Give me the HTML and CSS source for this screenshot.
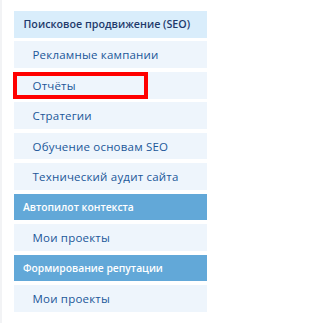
FILE: index.html
```html
<!DOCTYPE html>
<html lang="ru">
<head>
<meta charset="utf-8">
<link rel="stylesheet" href="styles.css">
</head>
<body>
<div class="page">
  <nav class="menu">
    <div class="row head-light">Поисковое продвижение (SEO)</div>
    <div class="row item">Рекламные кампании</div>
    <div class="row item marked">Отчёты<span class="mark"></span></div>
    <div class="row item">Стратегии</div>
    <div class="row item">Обучение основам SEO</div>
    <div class="row item">Технический аудит сайта</div>
    <div class="row head-dark">Автопилот контекста</div>
    <div class="row item">Мои проекты</div>
    <div class="row head-dark">Формирование репутации</div>
    <div class="row item">Мои проекты</div>
  </nav>
</div>
</body>
</html>
```
FILE: styles.css
```css
html, body {
  margin: 0;
  padding: 0;
  background: #ffffff;
}
.page {
  border-left: 2px solid #f2f3f5;
  min-height: 323px;
  box-sizing: border-box;
  padding: 11px 11px 0 12px;
}
.menu {
  display: flex;
  flex-direction: column;
  gap: 3.75px;
  width: 192.7px;
}
.row {
  height: 26.7px;
  display: flex;
  align-items: center;
  box-sizing: border-box;
  font-family: "Open Sans", "DejaVu Sans", sans-serif;
  white-space: nowrap;
  position: relative;
}
.head-light {
  background: #d9edfb;
  color: #1e3a6b;
  font-weight: 600;
  font-size: 10.7px;
  padding-left: 9.5px;
}
.item {
  background: #eef5fc;
  color: #1b5799;
  padding-left: 18.5px;
  font-size: 11.5px;
  letter-spacing: 0.2px;
}
.head-dark {
  background: #62a8d8;
  color: #ffffff;
  font-weight: 600;
  font-size: 10.3px;
  padding-left: 9px;
}
.mark {
  position: absolute;
  left: -1px;
  top: 0;
  width: 135px;
  height: 100%;
  border: 4px solid #ff0000;
  box-sizing: border-box;
}
```
